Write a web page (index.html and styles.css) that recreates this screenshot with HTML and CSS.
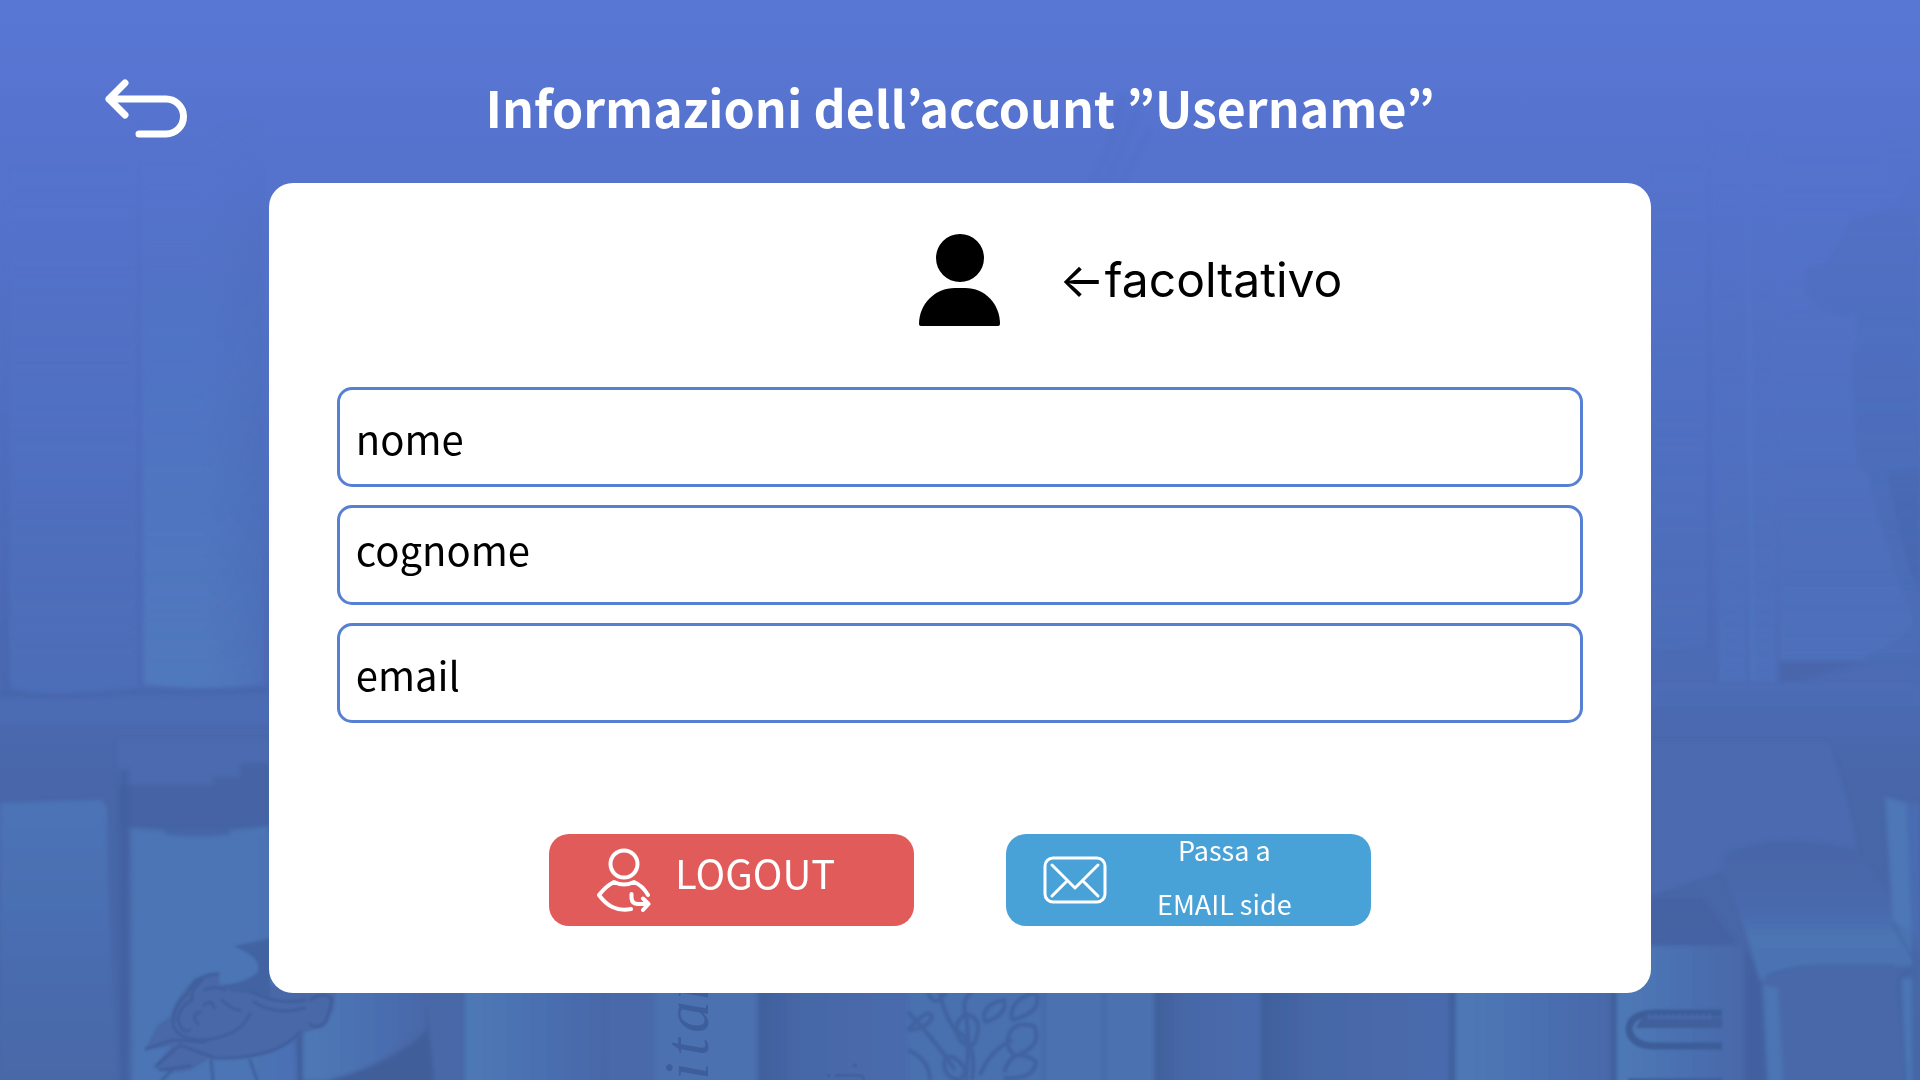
FILE: index.html
```
<!DOCTYPE html>
<html lang="it">
<head>
<meta charset="utf-8">
<meta name="viewport" content="width=device-width, initial-scale=1">
<title>Informazioni dell’account</title>
<link rel="stylesheet" href="styles.css">
</head>
<body>
<svg class="backdrop" viewBox="0 0 1920 1080" preserveAspectRatio="xMidYMid slice" aria-hidden="true">
  <defs>
    <linearGradient id="wall" x1="0" y1="0" x2="0" y2="1">
      <stop offset="0" stop-color="#5876d4"/><stop offset=".15" stop-color="#5573cd"/>
      <stop offset=".45" stop-color="#4f6fc0"/><stop offset=".65" stop-color="#4b6ab2"/>
      <stop offset=".72" stop-color="#4866a9"/><stop offset="1" stop-color="#4667a7"/>
    </linearGradient>
    <linearGradient id="fade" x1="0" y1="0" x2="0" y2="1">
      <stop offset="0" stop-color="#5077c4" stop-opacity="0"/><stop offset=".4" stop-color="#5077c4" stop-opacity=".7"/><stop offset="1" stop-color="#5079bd"/>
    </linearGradient>
    <linearGradient id="fadeDim" x1="0" y1="0" x2="0" y2="1">
      <stop offset="0" stop-color="#5071c2" stop-opacity="0"/><stop offset="1" stop-color="#4e70ba"/>
    </linearGradient>
    <linearGradient id="fadeDark" x1="0" y1="0" x2="0" y2="1">
      <stop offset="0" stop-color="#4664ac" stop-opacity="0"/><stop offset="1" stop-color="#4664ac" stop-opacity=".9"/>
    </linearGradient>
    <linearGradient id="side" x1="0" y1="0" x2="1" y2="0">
      <stop offset="0" stop-color="#4c6cb5" stop-opacity="0"/><stop offset="1" stop-color="#4a6ab4" stop-opacity=".8"/>
    </linearGradient>
    <linearGradient id="lowBook" x1="0" y1="0" x2="0" y2="1">
      <stop offset="0" stop-color="#4c74b6"/><stop offset=".5" stop-color="#4a6db0"/><stop offset="1" stop-color="#4868a6"/>
    </linearGradient>
    <linearGradient id="spine" x1="0" y1="0" x2="1" y2="0">
      <stop offset="0" stop-color="#4e79b6"/><stop offset=".5" stop-color="#4b70b1"/><stop offset="1" stop-color="#4868a9"/>
    </linearGradient>
    <linearGradient id="spineDark" x1="0" y1="0" x2="1" y2="0">
      <stop offset="0" stop-color="#40609c"/><stop offset=".3" stop-color="#4767a7"/><stop offset="1" stop-color="#4a6bad"/>
    </linearGradient>
    <linearGradient id="bookTop" x1="0" y1="0" x2="0" y2="1">
      <stop offset="0" stop-color="#4765a8"/><stop offset=".5" stop-color="#4a6aae"/><stop offset=".65" stop-color="#4b74b3"/><stop offset="1" stop-color="#4b73b3"/>
    </linearGradient>
    <linearGradient id="haze" gradientUnits="userSpaceOnUse" x1="0" y1="110" x2="0" y2="600">
      <stop offset="0" stop-color="#000"/><stop offset=".35" stop-color="#888"/><stop offset="1" stop-color="#fff"/>
    </linearGradient>
    <mask id="hazeMask" maskUnits="userSpaceOnUse" x="0" y="0" width="1920" height="1080"><rect width="1920" height="1080" fill="url(#haze)"/></mask>
    <filter id="soft" x="-5%" y="-5%" width="110%" height="110%"><feGaussianBlur stdDeviation="2"/></filter>
    <filter id="fine"><feGaussianBlur stdDeviation=".8"/></filter>
  </defs>
  <rect width="1920" height="1080" fill="url(#wall)"/>

  <g mask="url(#hazeMask)">
  <!-- upper shelf, left -->
  <g filter="url(#soft)">
    <path d="M8 150H140V684Q120 696 70 696Q16 696 8 680Z" fill="url(#fadeDim)" opacity=".6"/>
    <path d="M0 200H10V700H0Z" fill="url(#fadeDark)" opacity=".6"/>
    <path d="M142 110H263V684Q200 692 144 684Z" fill="url(#fade)"/>
    <path d="M200 110H263V688H200Z" fill="url(#side)" opacity=".7"/>
    <path d="M139 110V684" stroke="#4967b3" stroke-width="4" opacity=".55"/>
    <path d="M0 692Q60 700 120 692Q200 692 269 690" stroke="#4563a8" stroke-width="4" fill="none" opacity=".7"/>
    <path d="M0 700H269V724H0Z" fill="#4d6cb5" opacity=".7"/>
    <path d="M118 740H269V786H118Z" fill="#4b6baf"/>
    <path d="M120 785H213V777H240V763H269V828H120Z" fill="#4563a5"/>
  </g>

  <!-- upper shelf, right -->
  <g filter="url(#soft)">
    <path d="M1651 150H1708V644Q1680 650 1651 648Z" fill="url(#fadeDim)" opacity=".5"/>
    <path d="M1709 120V650" stroke="#4967b2" stroke-width="4" opacity=".5"/>
    <path d="M1716 120H1746V682H1719Z" fill="url(#fadeDim)"/>
    <path d="M1749 120H1776V682H1752Z" fill="url(#fadeDim)"/>
    <path d="M1748 220L1752 682" stroke="#5480c8" stroke-width="2" opacity=".7"/>
    <path d="M1780 150H1920V660H1780Z" fill="url(#fadeDim)"/>
    <path d="M1780 662H1864L1800 682H1780Z" fill="#4866ac"/>
    <path d="M1920 150L1906 190L1895 205L1850 218L1834 250L1826 264L1806 268L1805 290L1818 309L1840 317L1856 314V350L1852 354Q1850 410 1860 470L1868 472Q1880 540 1914 622Q1900 645 1865 655V661H1920Z" fill="#4869b2" opacity=".5"/>
    <path d="M1885 130L1882 166L1895 188L1912 186L1920 130Z" fill="#4a6cbc" opacity=".3"/>
    <path d="M1887 472Q1900 550 1920 595V470Z" fill="#4664ac" opacity=".5"/>
    <path d="M1651 684H1920V706H1651Z" fill="#4d6db6" opacity=".7"/>
    <path d="M1651 742H1828Q1850 800 1857 852L1770 842L1725 870L1651 895Z" fill="#4b6bb0"/>
  </g>
  </g>
  <path d="M1090 183Q1110 160 1124 95M1105 183Q1124 150 1140 100M1120 183L1150 130" stroke="#4c6ac0" stroke-width="8" opacity=".18" fill="none" filter="url(#soft)"/>

  <!-- lower shelf, left -->
  <g filter="url(#soft)">
    <path d="M0 803L100 800Q107 801 107 815Q108 920 118 1090H0Z" fill="url(#lowBook)"/>
    <path d="M124 770V1090" stroke="#425f9f" stroke-width="8" opacity=".75"/>
    <path d="M131 828Q200 836 269 826L300 1090H132Z" fill="#4c75b4"/>
    <path d="M240 835H300V1090H240Z" fill="url(#side)" opacity=".7"/>
    <path d="M165 832Q200 836 230 832" stroke="#4364a5" stroke-width="4" fill="none"/>
    <path d="M303 980H465V1090H303Z" fill="#4868a8"/>
    <path d="M303 980H425V1010Q405 1060 330 1080H303Z" fill="url(#spine)"/>
    <path d="M426 1000V1030Q400 1060 330 1080V1090H435Z" fill="#3f5f9a"/>
    <path d="M300 980V1090" stroke="#3e5e9b" stroke-width="6"/>
  </g>
  <g filter="url(#fine)">
    <path d="M234 946L252 945L270 938V985L300 992L335 993L334 1010L323 1028L305 1032Q275 1058 235 1058L210 1058L190 1070Q165 1076 154 1067L172 1046L145 1050L158 1025L170 1017Q174 1000 195 978L218 973L220 985Q245 984 258 972Q263 958 234 946Z" fill="#4868a7"/>
    <path d="M234 946L270 938V1000Q258 992 232 992L222 985Q245 984 258 972Q263 958 234 946Z" fill="#4261a0" opacity=".7"/>
    <g fill="none" stroke="#3e5c99" stroke-width="3" opacity=".75" stroke-linecap="round">
      <path d="M218 974Q196 974 187 994Q174 1005 173 1022Q174 1040 205 1040Q240 1036 250 1014"/>
      <path d="M202 980Q190 990 192 1000Q180 1005 178 1020Q182 1034 190 1030M205 990Q215 985 225 990M204 1005Q212 998 214 1008M200 1012Q190 1015 198 1024M222 1000Q232 1010 240 1010"/>
      <path d="M254 1002Q275 1016 305 1008M252 992Q280 1006 305 1000M310 1000Q325 990 332 1000L326 1022Q315 1030 310 1024"/>
      <path d="M146 1049L172 1040L205 1042M156 1066L180 1045L215 1058Q275 1060 300 1032M160 1070L190 1066"/>
      <path d="M211 1060L213 1080M250 1060L257 1080M172 1070L162 1080"/>
    </g>
  </g>

  <!-- lower shelf, centre -->
  <g filter="url(#soft)">
    <rect x="465" y="980" width="138" height="110" fill="url(#spine)"/>
    <rect x="606" y="980" width="52" height="110" fill="#4869aa"/>
    <rect x="655" y="980" width="102" height="110" fill="#4b71b0"/>
    <rect x="758" y="980" width="150" height="110" fill="url(#spineDark)"/>
    <rect x="908" y="980" width="136" height="110" fill="#4a6faf"/>
    <rect x="1044" y="980" width="110" height="110" fill="#4b71b1"/>
    <rect x="1154" y="980" width="106" height="110" fill="url(#spineDark)"/>
    <rect x="1260" y="980" width="190" height="110" fill="url(#spineDark)"/>
    <rect x="1456" y="980" width="156" height="110" fill="url(#spine)"/>
    <path d="M1452 980V1090M1614 980V1090" stroke="#3f5f9b" stroke-width="6"/>
    <path d="M1104 980V1090M1044 980V1090" stroke="#41639f" stroke-width="2"/>
  </g>
  <g class="spine-lettering">
    <text class="spine-title" transform="translate(708 1080) rotate(-90)">i</text>
    <text class="spine-title" transform="translate(708 1056) rotate(-90)">t</text>
    <text class="spine-title" transform="translate(708 1033) rotate(-90)">a</text>
    <text class="spine-title" transform="translate(708 1000) rotate(-90)">r</text>
    <text class="spine-note" transform="translate(857 1080) rotate(-90)">j.</text>
  </g>
  <g fill="none" stroke="#3f609d" stroke-width="4" opacity=".8" filter="url(#fine)">
    <path d="M972 1080Q978 1040 955 1030Q942 1010 940 993M966 1080Q970 1040 966 1015Q960 1000 974 990M980 1075Q990 1050 1012 1040M930 1080Q930 1060 908 1050M955 1070Q935 1040 908 1012"/>
    <path d="M966 1014Q950 1025 960 1040Q975 1055 978 1030Q980 1018 966 1014M985 1022Q980 1005 1004 1000Q1008 1015 985 1022M1012 1020Q1008 1000 1036 992Q1044 1012 1012 1020M1008 1038Q1012 1020 1034 1026Q1044 1045 1016 1056Q1006 1050 1008 1038M1004 1072Q1014 1044 1036 1062Q1034 1080 1004 1078M908 1030Q930 1005 932 1018Q925 1030 908 1030M944 1062Q950 1048 966 1070L960 1080Q944 1078 944 1062M928 992Q935 1010 946 992"/>
  </g>

  <!-- lower shelf, right -->
  <g filter="url(#soft)">
    <path d="M1651 898H1702L1738 945H1651Z" fill="#4462a3"/>
    <path d="M1617 946H1744V1090H1617Z" fill="url(#spine)"/>
    <path d="M1745 945L1762 985L1768 1090H1745Z" fill="#4261a0"/>
    <path d="M1723 855Q1760 838 1820 843L1857 850L1912 930V965L1770 985L1760 980Q1740 910 1723 870Z" fill="url(#bookTop)"/>
    <path d="M1762 982Q1775 966 1830 966H1900L1904 1090H1768Z" fill="#4868aa"/>
    <path d="M1763 985L1778 988L1784 1090H1768Z" fill="#4c75b4"/>
    <path d="M1885 797L1907 803L1912 932L1893 922Z" fill="#4d77b7"/>
    <path d="M1908 803H1920V960L1912 925Z" fill="#4a6cb2"/>
    <path d="M1902 978H1912V1090H1906Z" fill="#4c76b5"/>
    <path d="M1765 978Q1785 965 1830 966H1895M1912 972Q1898 972 1898 988L1906 1080M1892 922L1914 960" fill="none" stroke="#3e60a0" stroke-width="2" opacity=".8"/>
  </g>
  <g filter="url(#fine)">
    <path d="M1722 1013H1654Q1629 1014 1629 1030Q1632 1046 1655 1046H1722" fill="none" stroke="#3e5d99" stroke-width="7"/>
    <path d="M1642 1018H1722V1028H1636Z" fill="#3f5e9b"/>
    <path d="M1648 1017H1714" stroke="#4868a8" stroke-width="6" stroke-dasharray="3 3"/>
    <path d="M1628 1080H1722" stroke="#3e5d99" stroke-width="3"/>
  </g>
</svg>

<div class="page">
  <header class="page-header">
    <button class="back-button" type="button" aria-label="Indietro">
      <svg viewBox="0 0 84 60" fill="none" stroke="#fff" stroke-width="7" stroke-linecap="round" stroke-linejoin="round"><path d="M21 5L5 21L21 37M5 21H62A17 17 0 0 1 62 56H35"/></svg>
    </button>
    <h1 class="page-title">Informazioni dell’account ”Username”</h1>
  </header>

  <main class="card">
    <div class="avatar-row">
      <svg class="avatar" viewBox="0 0 82 92" aria-hidden="true"><circle cx="41" cy="24" r="24"/><path d="M0 90C0 70 16 54 36 54H46C66 54 81 70 81 90Q81 92 79 92H3Q0 92 0 90Z"/></svg>
      <p class="avatar-note">←facoltativo</p>
    </div>
    <form class="account-form">
      <input class="field field-low" type="text" aria-label="nome" value="nome">
      <input class="field" type="text" aria-label="cognome" value="cognome">
      <input class="field field-low" type="text" aria-label="email" value="email">
    </form>
    <div class="actions">
      <button class="action action-logout" type="button">
        <svg class="icon-logout" viewBox="0 0 54 66" fill="none" stroke="#fff" stroke-width="4" stroke-linecap="round" stroke-linejoin="round"><circle cx="27" cy="17" r="13.5"/><path d="M51 48C47 41 42 37 37 35Q27 40 17 35C11 38 6 43 2 48C9 58 20 65 34 62M34.500 47V51Q35 57 41 57H51M46 51.500L51.500 57L46 63"/></svg>
        <span class="logout-label">LOGOUT</span>
      </button>
      <button class="action action-email" type="button">
        <svg class="icon-mail" viewBox="0 0 64 48" fill="none" stroke="#fff" stroke-width="3" stroke-linecap="round" stroke-linejoin="round"><rect x="2" y="2" width="60" height="44" rx="8"/><path d="M9 9L32 32L55 9M9 40L24 25M55 40L40 25"/></svg>
        <span class="email-label">Passa a<br>EMAIL side</span>
      </button>
    </div>
  </main>
</div>
</body>
</html>
```
FILE: styles.css
```
* {
  box-sizing: border-box;
}

body {
  margin: 0;
  min-height: 100vh;
  background: #4d6cb8;
  font-family: "Noto Sans CJK KR", "Noto Sans", sans-serif;
  color: #000;
}

button {
  border: 0;
  padding: 0;
  font: inherit;
  color: #fff;
  cursor: pointer;
}

.backdrop {
  position: fixed;
  inset: 0;
  z-index: -1;
  width: 100%;
  height: 100%;
}

.spine-lettering {
  fill: #3e5e9b;
}

.spine-title {
  font: italic 64px "Liberation Serif", serif;
}

.spine-note {
  font: 40px "Liberation Sans", sans-serif;
  opacity: 0.6;
}

.page {
  display: flex;
  flex-direction: column;
  align-items: center;
  min-height: 100vh;
}

.page-header {
  display: grid;
  grid-template-columns: 1fr auto 1fr;
  align-items: start;
  width: 100%;
  padding: 70px 104px 40px;
}

.back-button {
  justify-self: start;
  display: flex;
  margin-top: 8px;
  background: none;
}

.back-button svg {
  width: 84px;
  height: 60px;
}

.page-title {
  margin: 0;
  font-size: 50px;
  font-weight: 700;
  line-height: 73px;
  color: #fff;
}

.card {
  width: 72%;
  padding: 51px 68px 67px;
  border-radius: 24px;
  background: #fff;
}

.avatar-row {
  display: grid;
  grid-template-columns: 1fr auto 1fr;
  align-items: center;
  column-gap: 58px;
}

.avatar {
  grid-column: 2;
  width: 82px;
  height: 92px;
}

.avatar-note {
  margin: 0;
  font-family: Inter, sans-serif;
  font-size: 48px;
  line-height: 60px;
}

.account-form {
  display: flex;
  flex-direction: column;
  gap: 18px;
  margin-top: 61px;
}

.field {
  width: 100%;
  height: 100px;
  padding: 0 16px 12px;
  border: 3px solid #5580d3;
  border-radius: 15px;
  background: #fff;
  font: inherit;
  font-size: 40px;
  color: #000;
}

.field-low {
  padding-top: 2px;
  padding-bottom: 0;
}

.actions {
  display: flex;
  justify-content: center;
  gap: 92px;
  margin-top: 111px;
}

.action {
  display: flex;
  align-items: center;
  width: 365px;
  height: 92px;
  border-radius: 20px;
}

.action-logout {
  gap: 24px;
  padding-left: 48px;
  background: #e25b5b;
}

.action-email {
  gap: 50px;
  padding-left: 37px;
  background: #48a2d8;
}

.icon-logout {
  width: 54px;
  height: 66px;
}

.icon-mail {
  width: 64px;
  height: 48px;
}

.logout-label {
  padding-bottom: 16px;
  font-size: 40px;
  line-height: 56px;
}

.email-label {
  padding-bottom: 6px;
  font-size: 27px;
  line-height: 54px;
  text-align: center;
}
```
